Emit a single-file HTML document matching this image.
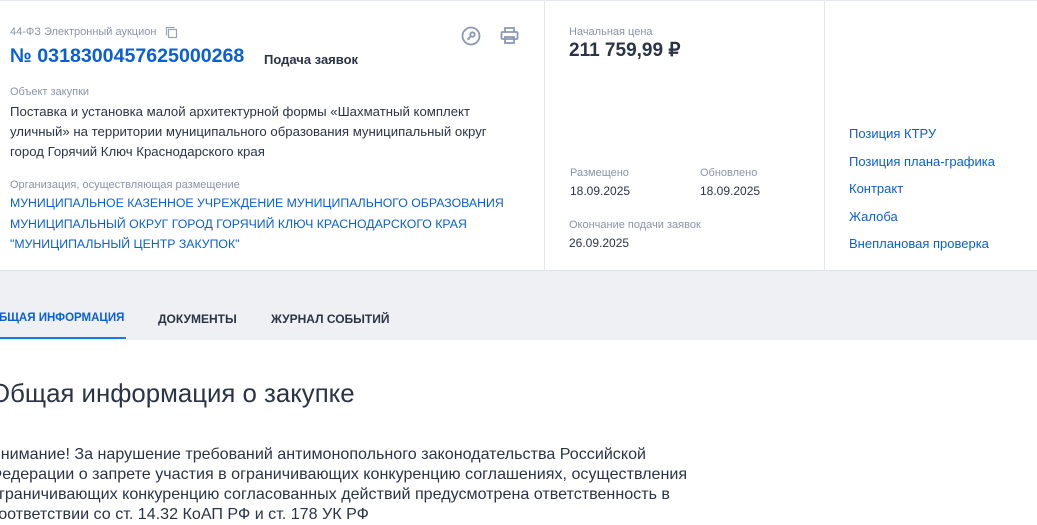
<!DOCTYPE html>
<html><head><meta charset="utf-8"><style>
*{margin:0;padding:0;box-sizing:border-box}
body{width:1037px;height:525px;overflow:hidden;background:#fff;font-family:"Liberation Sans",sans-serif;position:relative;color:#334059}
.a{position:absolute;white-space:nowrap}
.lbl{font-size:11px;color:#8a94a8}
.txt{font-size:13px;color:#2b3446}
.blue{color:#0a5fd6}
</style></head><body>
<div class="a" style="left:0;top:0;width:1037px;height:1px;background:#e3e8f0"></div>
<div class="a" style="left:0;top:270px;width:1037px;height:70px;background:#eef0f3;border-top:1px solid #dde4ee"></div>
<div class="a" style="left:544px;top:0;width:1px;height:270px;background:#e3e8f0"></div>
<div class="a" style="left:824px;top:0;width:1px;height:270px;background:#e3e8f0"></div>

<div class="a lbl" style="left:10px;top:26px">44-ФЗ Электронный аукцион</div>
<svg class="a" style="left:165px;top:26px" width="13" height="13" viewBox="0 0 13 13" fill="none" stroke="#9aa3b5" stroke-width="1.2"><rect x="3.5" y="3.5" width="8" height="8"/><path d="M1.5 9.5V1.5h8"/></svg>
<div class="a blue" style="left:10px;top:45px;font-size:19.6px;font-weight:bold">№ 0318300457625000268</div>
<div class="a" style="left:264px;top:52px;font-size:13px;font-weight:bold;color:#2b3446">Подача заявок</div>
<svg class="a" style="left:461px;top:26px" width="20" height="20" viewBox="0 0 20 20" fill="none" stroke="#8c97b2" stroke-width="1.8"><circle cx="10" cy="10" r="8.5"/><circle cx="11.5" cy="8.5" r="2.2"/><path d="M10 10l-3.5 3.5M7.5 12.5l1 1"/></svg>
<svg class="a" style="left:500px;top:26px" width="19" height="19" viewBox="0 0 19 19" fill="none" stroke="#8c97b2" stroke-width="1.8"><path d="M5 6V2h9v4"/><rect x="1.5" y="6" width="16" height="7" rx="1"/><rect x="5" y="11" width="9" height="6"/></svg>

<div class="a lbl" style="left:10px;top:86px">Объект закупки</div>
<div class="a txt" style="left:10px;top:102px;line-height:20px;font-size:13.2px">Поставка и установка малой архитектурной формы «Шахматный комплект<br>уличный» на территории муниципального образования муниципальный округ<br>город Горячий Ключ Краснодарского края</div>
<div class="a lbl" style="left:10px;top:179px">Организация, осуществляющая размещение</div>
<div class="a blue" style="left:10px;top:193px;font-size:12.3px;line-height:20.5px">МУНИЦИПАЛЬНОЕ КАЗЕННОЕ УЧРЕЖДЕНИЕ МУНИЦИПАЛЬНОГО ОБРАЗОВАНИЯ<br>МУНИЦИПАЛЬНЫЙ ОКРУГ ГОРОД ГОРЯЧИЙ КЛЮЧ КРАСНОДАРСКОГО КРАЯ<br>"МУНИЦИПАЛЬНЫЙ ЦЕНТР ЗАКУПОК"</div>

<div class="a lbl" style="left:569px;top:26px">Начальная цена</div>
<div class="a" style="left:569px;top:39px;font-size:19px;font-weight:bold;color:#2b3446">211 759,99 ₽</div>
<div class="a lbl" style="left:570px;top:167px">Размещено</div>
<div class="a txt" style="left:570px;top:184px;font-size:12px">18.09.2025</div>
<div class="a lbl" style="left:700px;top:167px">Обновлено</div>
<div class="a txt" style="left:700px;top:184px;font-size:12px">18.09.2025</div>
<div class="a lbl" style="left:569px;top:219px">Окончание подачи заявок</div>
<div class="a txt" style="left:569px;top:236px;font-size:12px">26.09.2025</div>

<div class="a blue" style="left:849px;top:120px;font-size:13px;line-height:27.5px">Позиция КТРУ<br>Позиция плана-графика<br>Контракт<br>Жалоба<br>Внеплановая проверка</div>

<div class="a blue" style="left:-10px;top:312px;font-size:11.5px;font-weight:bold">ОБЩАЯ ИНФОРМАЦИЯ</div>
<div class="a" style="left:0;top:337px;width:126px;height:2px;background:#1b7ae0"></div>
<div class="a" style="left:158px;top:312px;font-size:12px;font-weight:bold;color:#2b3446">ДОКУМЕНТЫ</div>
<div class="a" style="left:271px;top:312px;font-size:12px;font-weight:bold;color:#2b3446">ЖУРНАЛ СОБЫТИЙ</div>

<div class="a" style="left:-10px;top:380px;font-size:25.8px;color:#2b3446">Общая информация о закупке</div>
<div class="a" style="left:-10px;top:444px;font-size:16.1px;line-height:20px;color:#2b3446">Внимание! За нарушение требований антимонопольного законодательства Российской<br>Федерации о запрете участия в ограничивающих конкуренцию соглашениях, осуществления<br>ограничивающих конкуренцию согласованных действий предусмотрена ответственность в<br>соответствии со ст. 14.32 КоАП РФ и ст. 178 УК РФ</div>
</body></html>
